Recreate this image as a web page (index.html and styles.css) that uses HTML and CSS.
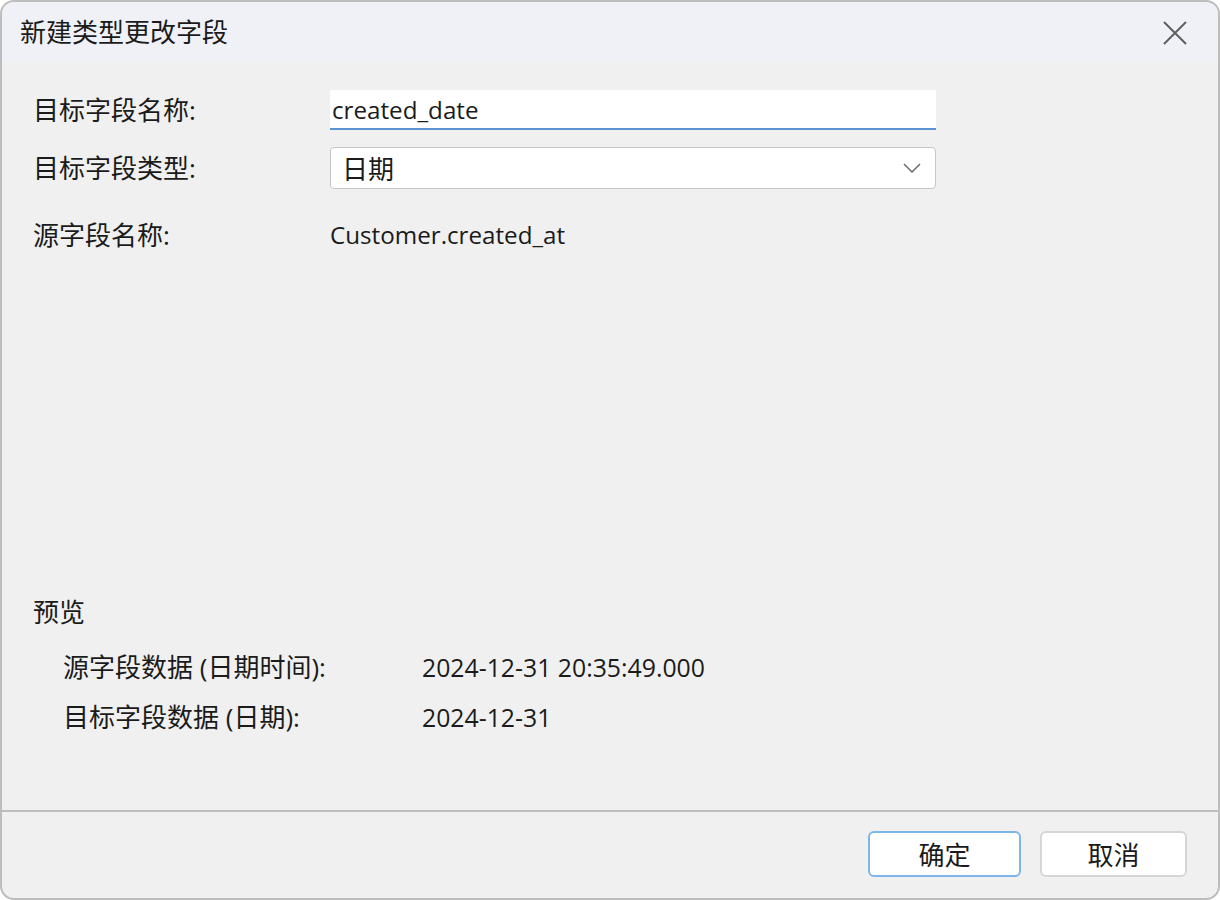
FILE: index.html
```html
<!DOCTYPE html>
<html lang="zh-CN">
<head>
    <meta charset="UTF-8">
    <title>新建类型更改字段</title>
    <link rel="stylesheet" href="styles.css">
</head>
<body>
    <div class="dialog">
        <div class="titlebar">
            <span class="title">新建类型更改字段</span>
            <button class="close-btn" aria-label="关闭">
                <svg width="24" height="24" viewBox="0 0 24 24">
                    <path d="M1 1 L23 23 M23 1 L1 23" stroke="#5f5f5f" stroke-width="2" fill="none"/>
                </svg>
            </button>
        </div>

        <div class="content">
            <div class="form-grid">
                <label class="field-label" for="target-name">目标字段名称:</label>
                <input class="text-input latin" id="target-name" type="text" value="created_date">

                <label class="field-label" for="target-type">目标字段类型:</label>
                <div class="select-box" id="target-type">
                    <span>日期</span>
                    <svg width="18" height="10" viewBox="0 0 18 10">
                        <path d="M1 1 L9 9 L17 1" stroke="#6b6b6b" stroke-width="1.5" fill="none"/>
                    </svg>
                </div>

                <span class="field-label source-row">源字段名称:</span>
                <span class="field-value source-row latin">Customer.created_at</span>
            </div>

            <div class="preview">
                <div class="preview-title">预览</div>
                <div class="preview-grid">
                    <span>源字段数据 (日期时间):</span>
                    <span class="preview-value">2024-12-31 20:35:49.000</span>
                    <span>目标字段数据 (日期):</span>
                    <span class="preview-value">2024-12-31</span>
                </div>
            </div>
        </div>

        <div class="footer">
            <button class="btn btn-primary">确定</button>
            <button class="btn btn-cancel">取消</button>
        </div>
    </div>
</body>
</html>
```

FILE: styles.css
```css
html {
    background: #ffffff;
}
body {
    margin: 0;
    font-family: "Open Sans", "Noto Sans CJK SC", sans-serif;
    font-size: 26px;
    color: #1b1b1b;
}
.latin {
    font-size: 24.2px;
}
.dialog {
    width: 1220px;
    height: 900px;
    box-sizing: border-box;
    border: 2px solid #bdbdbd;
    border-radius: 14px;
    overflow: hidden;
    background: #f0f0f0;
    display: flex;
    flex-direction: column;
}
.titlebar {
    height: 60px;
    flex: none;
    background: #f0f1f7;
    display: flex;
    align-items: center;
    justify-content: space-between;
    padding: 0 31px 0 18px;
}
.title {
    line-height: 30px;
}
.close-btn {
    border: none;
    background: none;
    padding: 0;
    width: 24px;
    height: 24px;
    margin-top: 1px;
}
.close-btn svg {
    display: block;
}
.content {
    flex: 1;
    padding: 28px 31px 0 31px;
    display: flex;
    flex-direction: column;
    justify-content: space-between;
}
.form-grid {
    display: grid;
    grid-template-columns: 297px 606px;
    align-items: center;
    row-gap: 17px;
}
.field-label {
    line-height: 30px;
}
.text-input {
    box-sizing: border-box;
    height: 40px;
    border: none;
    border-bottom: 2px solid #5b93d3;
    background: #ffffff;
    font-family: inherit;
    color: inherit;
    padding: 0 2px;
    outline: none;
}
.select-box {
    box-sizing: border-box;
    height: 42px;
    border: 1px solid #c6c6c6;
    border-radius: 4px;
    background: #ffffff;
    display: flex;
    align-items: center;
    justify-content: space-between;
    padding: 0 14px 0 11px;
}
.select-box svg {
    display: block;
}
.source-row {
    margin-top: 14px;
    line-height: 30px;
}
.preview {
    padding-bottom: 78px;
}
.preview-title {
    line-height: 30px;
}
.preview-grid {
    display: grid;
    grid-template-columns: 359px auto;
    row-gap: 20px;
    padding-left: 30px;
    margin-top: 25px;
    line-height: 30px;
}
.preview-value {
    font-size: 24.8px;
}
.footer {
    flex: none;
    box-sizing: border-box;
    height: 88px;
    border-top: 2px solid #bdbdbd;
    display: flex;
    justify-content: flex-end;
    align-items: flex-start;
    gap: 19px;
    padding: 19px 31px 0 0;
}
.btn {
    height: 46px;
    border-radius: 6px;
    background: #ffffff;
    font: inherit;
    color: #1b1b1b;
    cursor: pointer;
}
.btn-primary {
    width: 153px;
    border: 2px solid #7db6e8;
}
.btn-cancel {
    width: 147px;
    border: 2px solid #d6d6d6;
}
```
